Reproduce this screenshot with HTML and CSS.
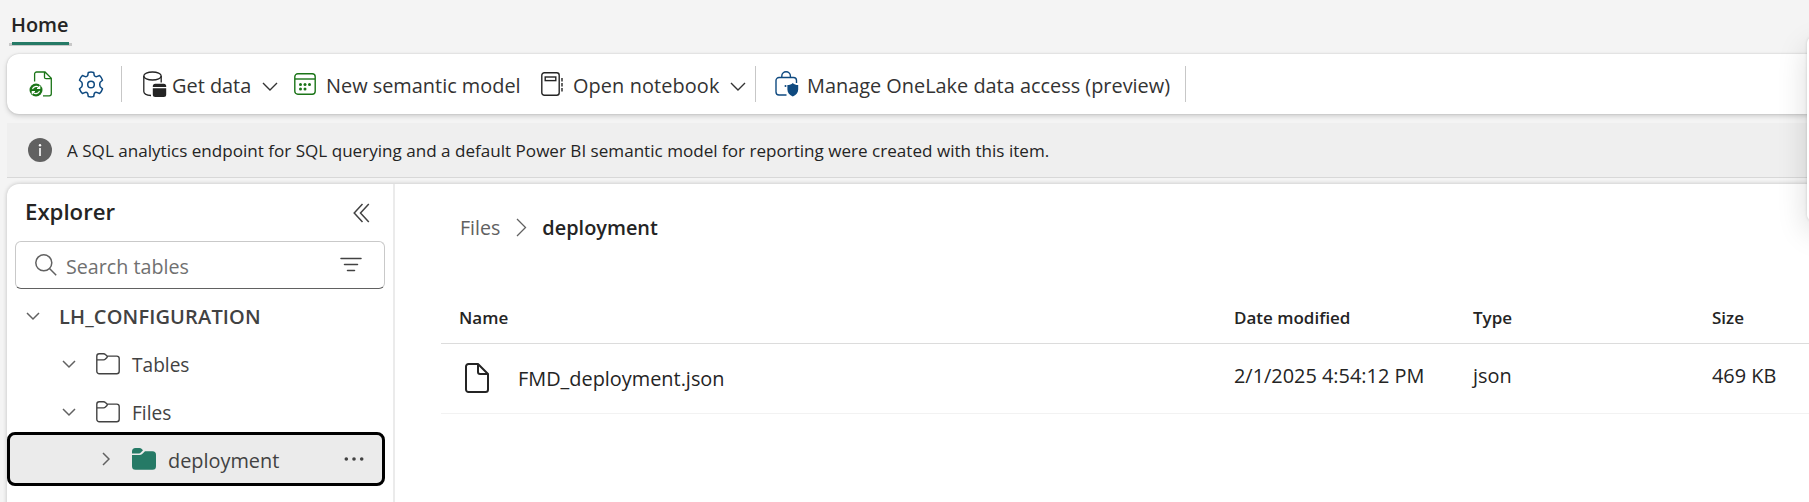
FILE: index.html
```html
<!DOCTYPE html>
<html lang="en">
<head>
<meta charset="utf-8">
<title>LH_CONFIGURATION</title>
<link rel="stylesheet" href="styles.css">
</head>
<body>
<nav class="tabs"><a class="tab">Home</a></nav>

<div class="toolbar">
  <button class="tool tool-file">
    <svg width="24" height="26" viewBox="0 0 24 26" fill="none" stroke="#1a7417" stroke-width="1.3">
      <path d="M5.6 10.5V3a2 2 0 0 1 2-2H16l6.3 6.3V22.800a2 2 0 0 1-2 2H14M15.500 1v5.200a1.500 1.500 0 0 0 1.500 1.500h5.300"/>
      <circle cx="7" cy="19" r="6.500" fill="#1a7417" stroke="none"/>
      <path d="M3.500 18.200a3.700 3.700 0 0 1 6.200-1.700l.8.8M10.700 14.800v2.700H8M10.500 19.800a3.700 3.700 0 0 1-6.200 1.700l-.8-.8M3.300 23.200v-2.700H6" stroke="#fff" stroke-width="1.200"/>
    </svg>
  </button>
  <button class="tool tool-gear">
    <svg width="26" height="27" viewBox="0 0 26 27" fill="none" stroke="#0f4a80" stroke-width="1.5" stroke-linejoin="round">
      <path d="M10.300 1.500Q13 .7 15.700 1.500L16.300 4.600Q17.200 5.800 18.700 5.600L21.600 4.500Q23.700 6.500 24.500 9.300L22.200 11.300Q21.300 13.500 22.200 15.700L24.500 17.700Q23.700 20.500 21.600 22.500L18.700 21.400Q17.200 21.200 16.300 22.400L15.700 25.500Q13 26.300 10.300 25.500L9.700 22.400Q8.800 21.200 7.300 21.400L4.400 22.500Q2.300 20.500 1.500 17.700L3.800 15.700Q4.700 13.500 3.800 11.300L1.500 9.300Q2.300 6.500 4.400 4.500L7.300 5.600Q8.800 5.800 9.700 4.600Z"/>
      <circle cx="13" cy="13.500" r="3.300"/>
    </svg>
  </button>
  <span class="divider"></span>
  <button class="tool tool-data">
    <svg width="24" height="27" viewBox="0 0 24 27" fill="none" stroke="#242424" stroke-width="1.3">
      <ellipse cx="9.500" cy="5" rx="8.700" ry="4"/>
      <path d="M.8 5v15.500c0 2 3 3.700 7.200 4M18.200 5v6.500"/>
      <path d="M9.800 16v-.8a2.500 2.500 0 0 1 2.500-2.500h8.400a2.500 2.500 0 0 1 2.500 2.500v.8zM9.800 17.200h13.400v6.300a2.500 2.500 0 0 1-2.500 2.500h-8.400a2.500 2.500 0 0 1-2.500-2.500z" fill="#242424" stroke="none"/>
    </svg>
    <span class="label">Get data</span>
    <svg class="caret" width="16" height="10" viewBox="0 0 16 10" fill="none" stroke="#333" stroke-width="1.4"><path d="M1 1l7 7 7-7"/></svg>
  </button>
  <button class="tool tool-model">
    <svg width="22" height="22" viewBox="0 0 22 22" fill="none" stroke="#1a7417" stroke-width="1.4">
      <rect x=".8" y=".8" width="20.400" height="20.400" rx="3"/><path d="M1 6h20"/>
      <g fill="#1a7417" stroke="none"><circle cx="6.500" cy="11.500" r="1.500"/><circle cx="11" cy="11.500" r="1.500"/><circle cx="15.500" cy="11.500" r="1.500"/><circle cx="6.500" cy="16" r="1.500"/><circle cx="11" cy="16" r="1.500"/></g>
    </svg>
    <span class="label">New semantic model</span>
  </button>
  <button class="tool tool-notebook">
    <svg width="23" height="24" viewBox="0 0 23 24" fill="none" stroke="#242424" stroke-width="1.400">
      <rect x=".8" y=".8" width="17.400" height="22.400" rx="2.500"/><rect x="4.200" y="5" width="10.600" height="3.600"/>
      <path d="M21 6v3.500M21 11v3.500M21 16v3.500"/>
    </svg>
    <span class="label">Open notebook</span>
    <svg class="caret" width="16" height="10" viewBox="0 0 16 10" fill="none" stroke="#333" stroke-width="1.4"><path d="M1 1l7 7 7-7"/></svg>
  </button>
  <span class="divider"></span>
  <button class="tool tool-access">
    <svg width="24" height="26" viewBox="0 0 24 26" fill="none" stroke="#0f4a80" stroke-width="1.400">
      <path d="M11.500 24H4a3 3 0 0 1-3-3V9.500a3 3 0 0 1 3-3h14.500a3 3 0 0 1 3 3V12M6.800 6.300V5a4.300 4.300 0 0 1 8.600 0v1.300"/>
      <circle cx="10.500" cy="15" r="1" fill="#0f4a80" stroke="none"/>
      <path d="M17.800 12c1.400 1.400 3.200 2.100 5.400 2.100v4.400c0 3.300-2.200 5.700-5.400 7-3.200-1.300-5.400-3.700-5.400-7v-4.400c2.200 0 4-.7 5.400-2.100z" fill="#0f4a80" stroke="none"/>
    </svg>
    <span class="label">Manage OneLake data access (preview)</span>
  </button>
  <span class="divider"></span>
</div>

<div class="message">
  <svg width="24" height="24" viewBox="0 0 24 24"><circle cx="12" cy="12" r="12" fill="#616161"/><path d="M11.200 10h1.600v8h-1.600z" fill="#fff"/><circle cx="12" cy="7.300" r="1.200" fill="#fff"/></svg>
  <span>A SQL analytics endpoint for SQL querying and a default Power BI semantic model for reporting were created with this item.</span>
</div>

<div class="workspace">
  <aside class="explorer">
    <header class="explorer-head">
      <h2>Explorer</h2>
      <svg width="17" height="20" viewBox="0 0 17 20" fill="none" stroke="#424242" stroke-width="1.500"><path d="M9.500 1L1.200 10l8.300 9M15.800 1L7.500 10l8.300 9"/></svg>
    </header>
    <div class="search">
      <svg width="22" height="22" viewBox="0 0 22 22" fill="none" stroke="#616161" stroke-width="1.500"><circle cx="8.800" cy="8.800" r="8"/><path d="M14.500 14.500l6.700 6.700"/></svg>
      <span>Search tables</span>
      <svg class="filter" width="22" height="15" viewBox="0 0 22 15" fill="none" stroke="#424242" stroke-width="1.500" stroke-linecap="round"><path d="M1 1.500h20M4.500 7.500h13M7.500 13.500h7"/></svg>
    </div>
    <div class="row row-root">
      <svg width="14" height="9" viewBox="0 0 14 9" fill="none" stroke="#616161" stroke-width="1.500"><path d="M1 1l6 6 6-6"/></svg>
      <span>LH_CONFIGURATION</span>
    </div>
    <div class="row row-folder">
      <svg width="14" height="9" viewBox="0 0 14 9" fill="none" stroke="#616161" stroke-width="1.500"><path d="M1 1l6 6 6-6"/></svg>
      <svg width="24" height="22" viewBox="0 0 24 22" fill="none" stroke="#424242" stroke-width="1.400"><path d="M11 3.100h9.700a2.500 2.500 0 0 1 2.500 2.500v12.600a2.500 2.500 0 0 1-2.500 2.500H3.300a2.500 2.500 0 0 1-2.500-2.500V3.300A2.500 2.500 0 0 1 3.300.8h4.200c.8 0 1.400.3 1.900.8L11 3.100c.4.400.4.900 0 1.300L9.400 6.100c-.5.500-1.100.8-1.900.8H.8"/></svg>
      <span>Tables</span>
    </div>
    <div class="row row-folder">
      <svg width="14" height="9" viewBox="0 0 14 9" fill="none" stroke="#616161" stroke-width="1.500"><path d="M1 1l6 6 6-6"/></svg>
      <svg width="24" height="22" viewBox="0 0 24 22" fill="none" stroke="#424242" stroke-width="1.400"><path d="M11 3.100h9.700a2.500 2.500 0 0 1 2.500 2.500v12.600a2.500 2.500 0 0 1-2.500 2.500H3.300a2.500 2.500 0 0 1-2.500-2.500V3.300A2.500 2.500 0 0 1 3.300.8h4.200c.8 0 1.400.3 1.900.8L11 3.100c.4.400.4.900 0 1.300L9.400 6.100c-.5.500-1.100.8-1.900.8H.8"/></svg>
      <span>Files</span>
    </div>
    <div class="row row-selected">
      <svg width="8" height="14" viewBox="0 0 8 14" fill="none" stroke="#616161" stroke-width="1.500"><path d="M1 1l6 6-6 6"/></svg>
      <svg width="24" height="22" viewBox="0 0 24 22" fill="#257a66"><path d="M0 5.400V3.500A3.500 3.500 0 0 1 3.500 0h4c.8 0 1.500.3 2 .8l1.500 1.400-2.400 2.500c-.4.5-1 .7-1.500.7zM0 7h7.500c1 0 2-.4 2.700-1.100L13 3.200h7.500A3.500 3.500 0 0 1 24 6.700v11.600a3.500 3.500 0 0 1-3.500 3.500h-17A3.500 3.500 0 0 1 0 18.300z"/></svg>
      <span>deployment</span>
      <svg width="20" height="4" viewBox="0 0 20 4" fill="#424242"><circle cx="2.300" cy="2" r="1.800"/><circle cx="10" cy="2" r="1.800"/><circle cx="17.700" cy="2" r="1.800"/></svg>
    </div>
  </aside>

  <main class="content">
    <div class="crumbs">
      <span>Files</span>
      <svg width="11" height="19" viewBox="0 0 11 19" fill="none" stroke="#616161" stroke-width="1.300"><path d="M1 1l8.500 8.500L1 18"/></svg>
      <strong>deployment</strong>
    </div>
    <div class="grid grid-head"><span>Name</span><span>Date modified</span><span>Type</span><span>Size</span></div>
    <div class="grid grid-row">
      <span class="file">
        <svg width="24" height="30" viewBox="0 0 24 30" fill="none" stroke="#242424" stroke-width="2" stroke-linejoin="round"><path d="M13 1H3.500A2.500 2.500 0 0 0 1 3.500v23A2.500 2.500 0 0 0 3.500 29h17a2.500 2.500 0 0 0 2.500-2.500V11zM13 1v8a2 2 0 0 0 2 2h8"/></svg>
        <span>FMD_deployment.json</span>
      </span>
      <span>2/1/2025 4:54:12 PM</span><span>json</span><span>469 KB</span>
    </div>
  </main>
</div>
<div class="flyout"></div>
</body>
</html>
```
FILE: styles.css
```css
* { box-sizing: border-box; }
body {
  margin: 0;
  width: 1809px;
  height: 502px;
  overflow: hidden;
  position: relative;
  background: #f4f4f4;
  color: #242424;
  font: 19.9px/28px "Open Sans", "Noto Sans", sans-serif;
}
svg { display: block; flex: none; }
span, strong, h2 { white-space: nowrap; }

.tabs { height: 54px; padding: 10px 0 0 9px; display: flex; align-items: flex-start; }
.tab {
  width: 63px;
  height: 36px;
  padding: 1px 0 0 2px;
  font-weight: 600;
  background: linear-gradient(#257a66, #257a66) 3px 32px / 57px 3px no-repeat,
    linear-gradient(#c8c8c8, #c8c8c8) 0 33px / 63px 3px no-repeat;
}

.toolbar {
  position: relative;
  height: 60px;
  margin-left: 7px;
  display: flex;
  align-items: center;
  background: #fff;
  border-radius: 12px 0 0 12px;
  box-shadow: 0 0 2px rgba(0, 0, 0, .16), 0 2px 5px rgba(0, 0, 0, .17);
}
.divider { flex: none; width: 1px; height: 36px; background: #c7c7c7; }
.tool {
  flex: none;
  display: flex;
  align-items: center;
  height: 100%;
  padding: 0;
  border: 0;
  background: none;
  font: inherit;
  color: #333;
}
.label { padding-top: 4px; }
.caret { margin: 6px 0 0 auto; }
.tool-file { width: 62px; padding-left: 22px; }
.tool-gear { width: 52px; padding-left: 9px; }
.tool-data { width: 163px; padding: 0 7px 0 21px; }
.tool-data .label { margin-left: 5px; }
.tool-model { width: 245px; padding-left: 9px; }
.tool-model .label { margin-left: 10px; }
.tool-notebook { width: 225px; padding: 0 9px 0 11px; }
.tool-notebook .label { margin-left: 9px; letter-spacing: .1px; }
.tool-access { width: 429px; padding-left: 19px; }
.tool-access .label { margin-left: 8px; }

.message {
  height: 55px;
  margin: 9px 0 0 7px;
  padding-left: 21px;
  display: flex;
  align-items: center;
  gap: 15px;
  background: #efefef;
  border-bottom: 1px solid #d8d8d8;
  font-size: 17.080px;
}
.message span { padding-top: 2px; }

.workspace {
  height: 324px;
  margin: 6px 0 0 7px;
  display: flex;
  background: #fff;
  border-radius: 12px 0 0 0;
  box-shadow: 0 0 4px rgba(0, 0, 0, .22);
}
.explorer { width: 388px; flex: none; border-right: 2px solid #ebebeb; color: #424242; }
.explorer-head { height: 57px; padding: 0 23px 0 18px; display: flex; align-items: center; justify-content: space-between; }
.explorer-head h2 { margin: 0 0 2px; font-size: 22.200px; font-weight: 600; color: #242424; }
.search {
  width: 370px;
  height: 48px;
  margin: 0 0 3px 8px;
  padding: 0 22px 0 19px;
  display: flex;
  align-items: center;
  border: 1px solid #c9c9c9;
  border-bottom-color: #616161;
  border-radius: 6px;
  color: #707070;
}
.search span { margin: 4px auto 0 9px; font-size: 19.700px; }
.search .filter { margin-bottom: 1px; }
.row { height: 48px; display: flex; align-items: center; }
.row-root { padding-left: 19px; }
.row-root span { margin-left: 19px; padding-top: 2px; font-weight: 600; font-size: 20px; letter-spacing: .15px; }
.row-folder { padding-left: 55px; }
.row-folder svg + svg { margin-left: 20px; }
.row-folder span { margin-left: 12px; padding-top: 2px; font-size: 19.100px; }
.row-selected {
  width: 378px;
  height: 54px;
  margin-top: -4px;
  padding: 0 18px 0 92px;
  border: 3px solid #000;
  border-radius: 8px;
  background: #ebebeb;
}
.row-selected svg + svg { margin-left: 22px; }
.row-selected span { margin: 3px auto 0 12px; }

.content { flex: 1; min-width: 0; padding-top: 30px; }
.crumbs { display: flex; align-items: center; padding-left: 65px; color: #616161; }
.crumbs svg { margin: -2px 15px 0 16px; }
.crumbs span { font-size: 19.600px; }
.crumbs strong { font-weight: 600; color: #242424; }
.grid {
  margin-left: 46px;
  padding-left: 18px;
  display: grid;
  grid-template-columns: 775px 239px 239px 1fr;
  align-items: center;
}
.grid-head { height: 53px; margin-top: 49px; padding-top: 2px; border-bottom: 1px solid #dcdcdc; font-size: 17px; font-weight: 600; }
.grid-row { height: 70px; padding-bottom: 5px; border-bottom: 1px solid #f2f2f2; }
.file { display: flex; align-items: center; gap: 29px; padding: 3px 0 0 6px; }
.file span { padding-top: 2px; }

.flyout {
  position: absolute;
  left: 1807px;
  top: 37px;
  width: 40px;
  height: 184px;
  background: #fff;
  border-radius: 6px;
  box-shadow: 0 0 3px rgba(0, 0, 0, .15), 0 10px 30px rgba(0, 0, 0, .15);
}
```
